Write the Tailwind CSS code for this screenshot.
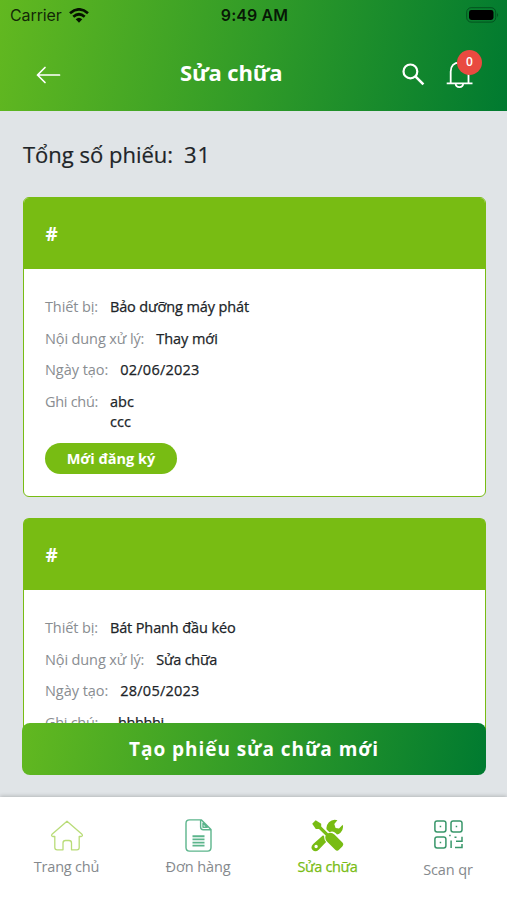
<!DOCTYPE html>
<html lang="vi">
<head>
<meta charset="utf-8">
<meta name="viewport" content="width=device-width, initial-scale=1">
<title>Sửa chữa</title>
<script src="https://cdn.jsdelivr.net/npm/@tailwindcss/browser@4"></script>
</head>
<body class="w-[507px] h-[900px] overflow-hidden bg-[#e0e4e7] font-['Open_Sans','Noto_Sans',sans-serif] text-[#202428]">
<div class="flex flex-col h-[900px]">
  <header class="h-[111px] shrink-0 flex flex-col bg-[linear-gradient(100deg,#62b820_0%,#2f9a28_52%,#007a30_100%)]">
    <div class="h-[30px] grid grid-cols-3 items-center pl-[10px] pr-[8px] text-black font-['Inter',sans-serif]">
      <div class="flex items-center gap-[7px]">
        <span class="text-[16px] leading-[20px] tracking-[-0.1px] text-black/80">Carrier</span>
        <svg class="w-[20px] h-[15px]" viewBox="0 0 20 15" fill="none" stroke="#061300" stroke-width="2.7"><path d="M1 5.2Q10-2.5 19 5.2M4.3 8.7Q10 3.8 15.7 8.7"/><path d="M6.7 11.3Q10 8.2 13.3 11.3L10 14.8Z" fill="#061300" stroke="none"/></svg>
      </div>
      <span class="text-center text-[16px] leading-[20px] font-semibold text-black/85 tracking-[0.1px]">9:49 AM</span>
      <svg class="justify-self-end w-[33px] h-[16px]" viewBox="0 0 33 16"><rect x=".7" y=".7" width="29" height="14.4" rx="4.5" fill="none" stroke="#00401a" stroke-opacity=".7"/><rect x="3" y="3" width="24.5" height="10" rx="2.4" fill="#000"/><path d="M31.3 5.5Q33 8 31.3 10.5Z" fill="#00401a"/></svg>
    </div>
    <div class="h-[81px] grid grid-cols-[180px_102px_1fr] items-center text-white">
      <svg class="ml-[36px] mt-[9px] w-[25px] h-[18px]" viewBox="0 0 25 18" fill="none" stroke="#fff" stroke-width="1.7" stroke-linecap="round" stroke-linejoin="round"><path d="M23.5 9H1.5M9 1.5 1.5 9 9 16.5"/></svg>
      <h1 class="mt-[2px] text-[22px] leading-[30px] font-bold tracking-[-0.15px] whitespace-nowrap">Sửa chữa</h1>
      <div class="flex items-center pl-[120px]">
        <svg class="mt-[8px] w-[23px] h-[23px]" viewBox="0 0 23 23" fill="none" stroke="#fff" stroke-width="2.2"><circle cx="8.4" cy="8.4" r="6.9"/><path d="m13.4 13.4 8 8" stroke-width="2.6"/></svg>
        <div class="relative ml-[21px] mt-[6px] w-[27px] h-[30px]">
          <svg class="w-[27px] h-[30px]" viewBox="0 0 27 30" fill="none" stroke="#fff" stroke-width="1.8"><path d="M.7 24.3h25.8M4.7 24V12.5C4.7 6.5 8 3.6 13.5 3.6S22.5 6.5 22.5 12.5V24M9.6 24.5C9.8 29.3 17 29.3 17.2 24.5"/></svg>
          <span class="absolute left-[11px] -top-[9px] size-[25px] rounded-full bg-[#e94a40] flex items-center justify-center text-[12px] leading-none font-semibold">0</span>
        </div>
      </div>
    </div>
  </header>

  <main class="relative h-[686px] shrink-0 px-[22px] overflow-hidden">
    <div class="flex gap-[11px] pl-px pt-[28px] text-[22px] leading-[30px] h-[86px]"><span class="[-webkit-text-stroke:0.2px_currentColor]">Tổng số phiếu:</span><span class="tracking-[0.8px] [-webkit-text-stroke:0.2px_currentColor]">31</span></div>
    <section class="h-[300px] ml-[0.5px] w-[463px] rounded-[6px] border-[1.5px] border-[#78bc13] bg-white overflow-hidden">
      <div class="h-[71px] bg-[#78bc13] px-[22px] pt-px flex items-center text-white text-[19px] font-bold">#</div>
      <div class="px-[21.5px] pt-[28px] text-[14.5px] leading-[20px] flex flex-col gap-[11.6px]">
        <div class="flex gap-[12px]"><span class="text-[#898d91] tracking-[-0.12px]">Thiết bị:</span><span class="tracking-[-0.12px] [-webkit-text-stroke:0.25px_currentColor]">Bảo dưỡng máy phát</span></div>
        <div class="flex gap-[12px]"><span class="text-[#898d91] tracking-[-0.12px]">Nội dung xử lý:</span><span class="tracking-[-0.05px] [-webkit-text-stroke:0.25px_currentColor]">Thay mới</span></div>
        <div class="flex gap-[12px]"><span class="text-[#898d91] tracking-[-0.05px]">Ngày tạo:</span><span class="tracking-[0.25px] [-webkit-text-stroke:0.25px_currentColor]">02/06/2023</span></div>
        <div class="flex gap-[12px]"><span class="text-[#898d91] tracking-[-0.3px]">Ghi chú:</span><span class="[-webkit-text-stroke:0.25px_currentColor]">abc<br>ccc</span></div>
        <div class="w-[132px] h-[31px] rounded-full bg-[#78bc13] text-white font-bold flex items-center justify-center">Mới đăng ký</div>
      </div>
    </section>
    <section class="mt-[21px] h-[240px] ml-[0.5px] w-[463px] rounded-t-[6px] border-[1.5px] border-b-0 border-[#78bc13] bg-white">
      <div class="h-[71px] bg-[#78bc13] px-[22px] pt-px flex items-center text-white text-[19px] font-bold rounded-t-[4px]">#</div>
      <div class="px-[21.5px] pt-[28px] text-[14.5px] leading-[20px] flex flex-col gap-[11.6px]">
        <div class="flex gap-[12px]"><span class="text-[#898d91] tracking-[-0.12px]">Thiết bị:</span><span class="tracking-[-0.12px] [-webkit-text-stroke:0.25px_currentColor]">Bát Phanh đầu kéo</span></div>
        <div class="flex gap-[12px]"><span class="text-[#898d91] tracking-[-0.12px]">Nội dung xử lý:</span><span class="tracking-[-0.25px] [-webkit-text-stroke:0.25px_currentColor]">Sửa chữa</span></div>
        <div class="flex gap-[12px]"><span class="text-[#898d91] tracking-[-0.05px]">Ngày tạo:</span><span class="tracking-[0.25px] [-webkit-text-stroke:0.25px_currentColor]">28/05/2023</span></div>
        <div class="flex gap-[20px]"><span class="text-[#898d91] tracking-[-0.3px]">Ghi chú:</span><span class="tracking-[-0.4px] [-webkit-text-stroke:0.25px_currentColor]">hhhhhi</span></div>
      </div>
    </section>
    <button class="absolute left-[22px] bottom-[22px] w-[464px] h-[52px] rounded-[8px] text-white text-[19px] font-bold tracking-[0.95px] whitespace-nowrap bg-[linear-gradient(100deg,#62b820_0%,#2f9a28_52%,#007a30_100%)]">Tạo phiếu sửa chữa mới</button>
  </main>

  <nav class="relative h-[103px] bg-white shadow-[0_-1px_4px_rgba(0,0,0,0.2)] grid grid-cols-[133px_130px_129px_115px] text-[14.5px] leading-[20px] text-[#85898d]">
    <div class="flex flex-col items-center pt-[23px] gap-[6px]">
      <svg class="w-[34px] h-[31px]" viewBox="0 0 34 31" fill="none" stroke="#b9dc78" stroke-width="1.3" stroke-linejoin="round"><path d="M17 1.2 32 14.3Q33.2 15.8 31.3 16.5H29.2V27.5Q29.2 29.8 27 29.8H21.5V23Q21.5 20.5 19 20.5H15.5Q13 20.5 13 23V29.8H7.2Q4.8 29.8 4.8 27.5V16.5H2.7Q.8 15.8 2 14.3Z"/></svg>
      <span class="tracking-[-0.2px]">Trang chủ</span>
    </div>
    <div class="flex flex-col items-center pt-[22px] gap-[5px]">
      <svg class="w-[27px] h-[33px]" viewBox="0 0 27 33" fill="none" stroke="#5cb58c" stroke-width="1.4" stroke-linejoin="round"><path d="M16.5.9H4.5Q1 .9 1 4.4V28.6Q1 32.1 4.5 32.1H22.5Q26 32.1 26 28.6V10.5ZM15.6 1V8Q15.6 10.7 18.3 10.7H26M18 4.2V8.3H22.3Z"/><path d="M7.5 17.2h12M7.5 20.4h12M7.5 23.6h12M7.5 26.6h12" stroke-width="1.9"/></svg>
      <span class="tracking-[-0.1px]">Đơn hàng</span>
    </div>
    <div class="flex flex-col items-center pt-[22px] gap-[5px] text-[#78bc13]">
      <svg class="w-[33px] h-[33px]" viewBox="0 0 33 33" fill="#78bc13"><path d="M1.2 4.7 4.7 1.2 10.2 4.8V7.5L17 14.2Q20.5 12.8 23.4 15.4L31.4 23.4Q33.2 25.4 31.3 27.4L28 30.8Q26.2 32.6 24.2 30.8L16.2 22.8Q13.4 19.9 14.7 16.6L8 10H4.8Z"/><path d="M26.4 1.2Q21.5-.2 17.9 3.3 14.8 6.6 15.6 10.6L18.5 13.2Q22 11.6 24.8 14.2L26 15.6Q27.8 15.4 29.5 13.7 33 10.1 31.7 5.7L28 9.6 24.6 9 23.3 5Z"/><path fill-rule="evenodd" d="M12.1 16.3 2.2 25Q-1 28.3 1.6 31 4.5 33.7 7.7 30.7L15.1 23Q12.8 20.1 13.2 17.4ZM6.8 27.5A1.7 1.7 0 1 0 3.4 27.5 1.7 1.7 0 1 0 6.8 27.5Z"/></svg>
      <span class="tracking-[-0.35px] [-webkit-text-stroke:0.25px_currentColor]">Sửa chữa</span>
    </div>
    <div class="flex flex-col items-center pt-[23px] pr-[3px] gap-[11px]">
      <svg class="w-[29px] h-[29px]" viewBox="0 0 29 29" fill="none" stroke="#38966a" stroke-width="1.5"><rect x=".9" y=".9" width="11" height="11" rx="2.2"/><rect x="17" y=".9" width="11" height="11" rx="2.2"/><rect x=".9" y="17" width="11" height="11" rx="2.2"/><path d="M5.7 6.4h1.5M21.7 6.4h1.5M5.7 22.5h1.5M15.2 15.5h1.5M17.1 20.5V28M20.5 17.2h2M22 21.2h6V16.7M21 27.4h7V24"/></svg>
      <span class="tracking-[-0.1px]">Scan qr</span>
    </div>
  </nav>
</div>
</body>
</html>
